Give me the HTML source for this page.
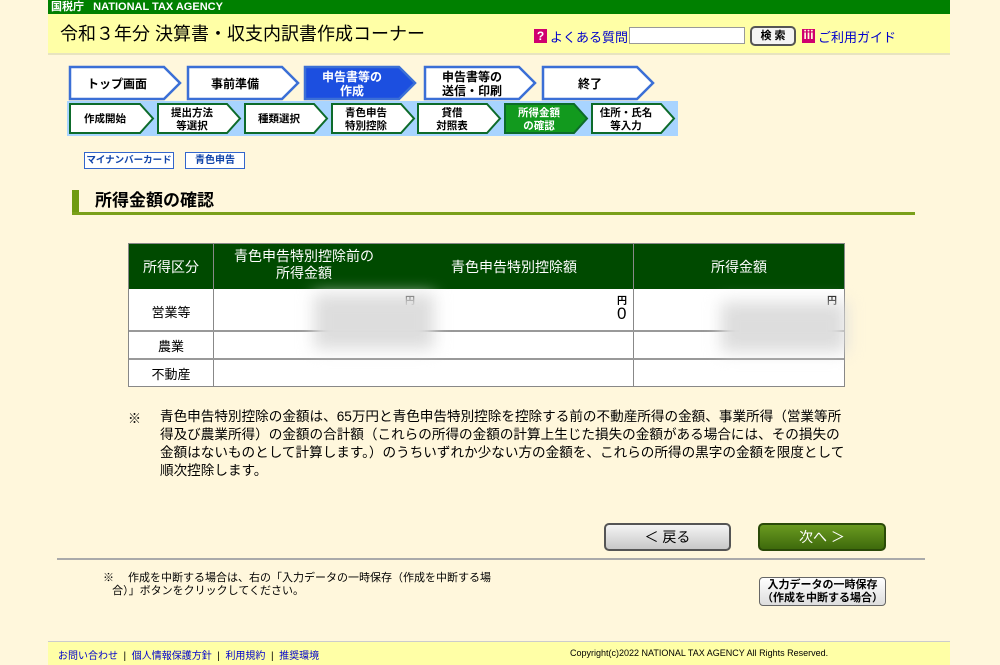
<!DOCTYPE html>
<html><head><meta charset="utf-8"><style>
*{margin:0;padding:0;box-sizing:border-box}
body{width:1000px;height:665px;background:#fff7dc;font-family:"Liberation Sans","Noto Sans CJK JP",sans-serif;position:relative;overflow:hidden;color:#000}
.a{position:absolute}
a{color:#0000cc}
</style></head><body>
<div class="a" style="left:48px;top:0;width:902px;height:14px;background:#008000;color:#fff;font-size:11px;font-weight:bold;line-height:14px;padding-left:3px">国税庁&nbsp;&nbsp; NATIONAL TAX AGENCY</div>
<div class="a" style="left:48px;top:14px;width:902px;height:41px;background:#ffffa6;border-bottom:2px solid #e8e4c0"></div>
<div class="a" style="left:60px;top:22px;font-size:18px;line-height:24px">令和３年分 決算書・収支内訳書作成コーナー</div>
<div class="a" style="left:534px;top:29px;width:13px;height:14px;background:#d0006f;color:#fff;font-size:12px;font-weight:bold;line-height:14px;text-align:center">?</div>
<a class="a" style="left:550px;top:27px;font-size:13px">よくある質問</a>
<div class="a" style="left:629px;top:27px;width:116px;height:17px;background:#fff;border:1px solid #999"></div>
<div class="a" style="left:750px;top:26px;width:46px;height:20px;background:#f4f4f4;border:2px solid #555;border-radius:5px;font-size:11px;font-weight:bold;text-align:center;line-height:16px">検 索</div>
<div class="a" style="left:802px;top:29px;width:13px;height:14px;background:#d0006f;color:#ffd;font-size:11px;font-weight:bold;line-height:14px;text-align:center">ⅲ</div>
<a class="a" style="left:818px;top:27px;font-size:13px">ご利用ガイド</a>

<svg class="a" style="left:0;top:0" width="1000" height="140" font-family="Liberation Sans,Noto Sans CJK JP,sans-serif" font-weight="bold">
<rect x="67" y="101" width="611" height="35" fill="#a8d4ff"/>
<g stroke="#3b6fd6" stroke-width="2.5">
<polygon points="70,67 164,67 180,83 164,99 70,99" fill="#fff"/>
<polygon points="188,67 282,67 298,83 282,99 188,99" fill="#fff"/>
<polygon points="305,67 399,67 415,83 399,99 305,99" fill="#1c4fe0"/>
<polygon points="425,67 519,67 535,83 519,99 425,99" fill="#fff"/>
<polygon points="543,67 637,67 653,83 637,99 543,99" fill="#fff"/>
</g>
<g font-size="12" text-anchor="middle">
<text x="117" y="88">トップ画面</text>
<text x="235" y="88">事前準備</text>
<text x="352" y="81" fill="#fff">申告書等の</text><text x="352" y="95" fill="#fff">作成</text>
<text x="472" y="81">申告書等の</text><text x="472" y="95">送信・印刷</text>
<text x="590" y="88">終了</text>
</g>
<g stroke="#0d6b2a" stroke-width="2">
<polygon points="70,104 140,104 153,118.5 140,133 70,133" fill="#fff"/>
<polygon points="158,104 227,104 240,118.5 227,133 158,133" fill="#fff"/>
<polygon points="245,104 314,104 327,118.5 314,133 245,133" fill="#fff"/>
<polygon points="332,104 401,104 414,118.5 401,133 332,133" fill="#fff"/>
<polygon points="418,104 487,104 500,118.5 487,133 418,133" fill="#fff"/>
<polygon points="505,104 574,104 587,118.5 574,133 505,133" fill="#129a1e"/>
<polygon points="592,104 661,104 674,118.5 661,133 592,133" fill="#fff"/>
</g>
<g font-size="10.5" text-anchor="middle">
<text x="105" y="122">作成開始</text>
<text x="192" y="116">提出方法</text><text x="192" y="129">等選択</text>
<text x="279" y="122">種類選択</text>
<text x="366" y="116">青色申告</text><text x="366" y="129">特別控除</text>
<text x="452" y="116">貸借</text><text x="452" y="129">対照表</text>
<text x="539" y="116" fill="#fff">所得金額</text><text x="539" y="129" fill="#fff">の確認</text>
<text x="626" y="116">住所・氏名</text><text x="626" y="129">等入力</text>
</g>
</svg>

<div class="a" style="left:84px;top:152px;width:90px;height:17px;border:1px solid #3366cc;background:#fff;color:#1144aa;font-size:9.5px;font-weight:bold;text-align:center;line-height:15px">マイナンバーカード</div>
<div class="a" style="left:185px;top:152px;width:60px;height:17px;border:1px solid #3366cc;background:#fff;color:#1144aa;font-size:10px;font-weight:bold;text-align:center;line-height:15px">青色申告</div>

<div class="a" style="left:72px;top:190px;width:7px;height:24px;background:#6e9a10"></div>
<div class="a" style="left:72px;top:212px;width:843px;height:3px;background:#7aa01a"></div>
<div class="a" style="left:95px;top:190px;font-size:17px;font-weight:bold;line-height:22px">所得金額の確認</div>

<div class="a" style="left:128px;top:243px;width:717px;height:144px;border:1px solid #888;background:#fff">
<div class="a" style="left:0;top:0;width:715px;height:45px;background:#004a00;color:#fff;font-size:14px"></div>
<div class="a" style="left:0;top:13px;width:84px;text-align:center;color:#fff;font-size:14px">所得区分</div>
<div class="a" style="left:95px;top:4px;width:160px;text-align:center;color:#fff;font-size:14px;line-height:17px">青色申告特別控除前の<br>所得金額</div>
<div class="a" style="left:300px;top:13px;width:170px;text-align:center;color:#fff;font-size:14px">青色申告特別控除額</div>
<div class="a" style="left:505px;top:13px;width:210px;text-align:center;color:#fff;font-size:14px">所得金額</div>
<div class="a" style="left:84px;top:0;width:1px;height:142px;background:#888"></div>
<div class="a" style="left:504px;top:0;width:1px;height:142px;background:#888"></div>
<div class="a" style="left:0;top:86px;width:715px;height:2px;background:#999"></div>
<div class="a" style="left:0;top:114px;width:715px;height:2px;background:#999"></div>
<div class="a" style="left:0;top:58px;width:84px;text-align:center;font-size:13px">営業等</div>
<div class="a" style="left:0;top:92px;width:84px;text-align:center;font-size:13px">農業</div>
<div class="a" style="left:0;top:120px;width:84px;text-align:center;font-size:13px">不動産</div>
<div class="a" style="left:276px;top:48px;font-size:10px;font-weight:bold">円</div>
<div class="a" style="left:488px;top:48px;font-size:10px;font-weight:bold">円</div>
<div class="a" style="left:698px;top:48px;font-size:10px;font-weight:bold">円</div>
<div class="a" style="left:488px;top:60px;font-size:17px">0</div>
<div class="a" style="left:185px;top:50px;width:120px;height:55px;background:#ddd;filter:blur(8px)"></div>
<div class="a" style="left:592px;top:58px;width:125px;height:50px;background:#ddd;filter:blur(8px)"></div>
</div>

<div class="a" style="left:128px;top:408px;font-size:13px">※</div>
<div class="a" style="left:160px;top:408px;width:685px;font-size:13.6px;line-height:18px">青色申告特別控除の金額は、65万円と青色申告特別控除を控除する前の不動産所得の金額、事業所得（営業等所得及び農業所得）の金額の合計額（これらの所得の金額の計算上生じた損失の金額がある場合には、その損失の金額はないものとして計算します。）のうちいずれか少ない方の金額を、これらの所得の黒字の金額を限度として順次控除します。</div>

<div class="a" style="left:604px;top:523px;width:127px;height:28px;border:2px solid #555;border-radius:5px;background:linear-gradient(#f4f4f4,#c8c8c8);font-size:14px;text-align:center;line-height:24px">＜ 戻る</div>
<div class="a" style="left:758px;top:523px;width:128px;height:28px;border:2px solid #2a4a08;border-radius:5px;background:linear-gradient(#6a9a20,#3e6a0c);color:#fff;font-size:14px;text-align:center;line-height:24px">次へ ＞</div>
<div class="a" style="left:57px;top:558px;width:868px;height:2px;background:#aaa"></div>

<div class="a" style="left:103px;top:572px;font-size:11px;line-height:13px;width:400px">※　 作成を中断する場合は、右の「入力データの一時保存（作成を中断する場<br>&nbsp;&nbsp;&nbsp;合）」ボタンをクリックしてください。</div>
<div class="a" style="left:759px;top:577px;width:127px;height:29px;border:1px solid #666;border-radius:4px;background:linear-gradient(#fff,#ddd);font-size:11px;font-weight:bold;text-align:center;line-height:13px;padding-top:1px">入力データの一時保存<br>（作成を中断する場合）</div>

<div class="a" style="left:48px;top:641px;width:902px;height:24px;background:#ffffa6;border-top:1px solid #ccc"></div>
<div class="a" style="left:58px;top:647px;font-size:10px"><a>お問い合わせ</a> &nbsp;|&nbsp; <a>個人情報保護方針</a> &nbsp;|&nbsp; <a>利用規約</a> &nbsp;|&nbsp; <a>推奨環境</a></div>
<div class="a" style="left:570px;top:648px;font-size:9px">Copyright(c)2022 NATIONAL TAX AGENCY All Rights Reserved.</div>
</body></html>
